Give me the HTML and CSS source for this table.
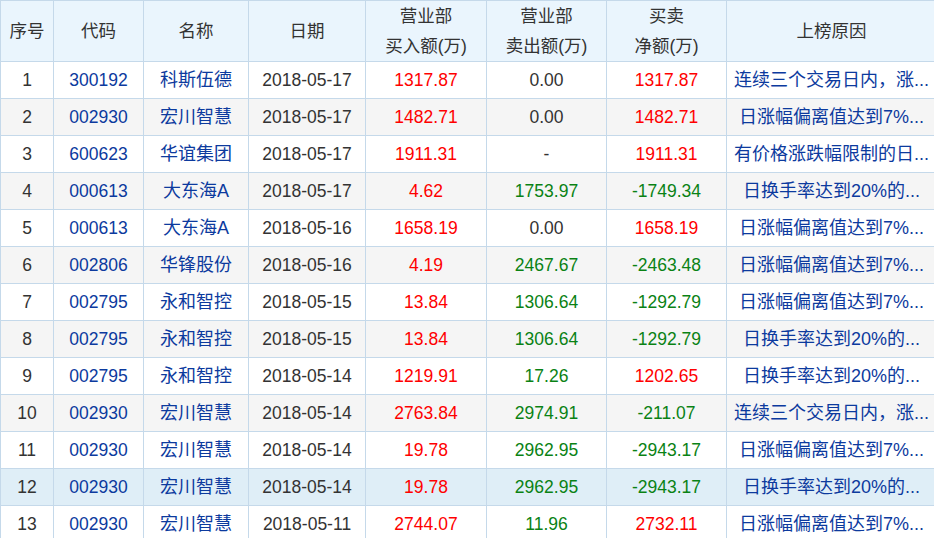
FILE: index.html
```html
<!DOCTYPE html>
<html lang="zh">
<head>
<meta charset="utf-8">
<link rel="stylesheet" href="styles.css">
</head>
<body>
<table class="lhb">
  <colgroup>
    <col class="c1"><col class="c2"><col class="c3"><col class="c4"><col class="c5"><col class="c6"><col class="c7"><col class="c8">
  </colgroup>
  <thead>
    <tr>
      <th>序号</th><th>代码</th><th>名称</th><th>日期</th>
      <th>营业部<br>买入额(万)</th><th>营业部<br>卖出额(万)</th><th>买卖<br>净额(万)</th><th>上榜原因</th>
    </tr>
  </thead>
  <tbody>
    <tr><td>1</td><td class="lk">300192</td><td class="lk cn">科斯伍德</td><td>2018-05-17</td><td class="up">1317.87</td><td>0.00</td><td class="up">1317.87</td><td class="lk cn">连续三个交易日内，涨...</td></tr>
    <tr><td>2</td><td class="lk">002930</td><td class="lk cn">宏川智慧</td><td>2018-05-17</td><td class="up">1482.71</td><td>0.00</td><td class="up">1482.71</td><td class="lk cn">日涨幅偏离值达到7%...</td></tr>
    <tr><td>3</td><td class="lk">600623</td><td class="lk cn">华谊集团</td><td>2018-05-17</td><td class="up">1911.31</td><td>-</td><td class="up">1911.31</td><td class="lk cn">有价格涨跌幅限制的日...</td></tr>
    <tr><td>4</td><td class="lk">000613</td><td class="lk cn">大东海A</td><td>2018-05-17</td><td class="up">4.62</td><td class="dn">1753.97</td><td class="dn">-1749.34</td><td class="lk cn">日换手率达到20%的...</td></tr>
    <tr><td>5</td><td class="lk">000613</td><td class="lk cn">大东海A</td><td>2018-05-16</td><td class="up">1658.19</td><td>0.00</td><td class="up">1658.19</td><td class="lk cn">日涨幅偏离值达到7%...</td></tr>
    <tr><td>6</td><td class="lk">002806</td><td class="lk cn">华锋股份</td><td>2018-05-16</td><td class="up">4.19</td><td class="dn">2467.67</td><td class="dn">-2463.48</td><td class="lk cn">日涨幅偏离值达到7%...</td></tr>
    <tr><td>7</td><td class="lk">002795</td><td class="lk cn">永和智控</td><td>2018-05-15</td><td class="up">13.84</td><td class="dn">1306.64</td><td class="dn">-1292.79</td><td class="lk cn">日涨幅偏离值达到7%...</td></tr>
    <tr><td>8</td><td class="lk">002795</td><td class="lk cn">永和智控</td><td>2018-05-15</td><td class="up">13.84</td><td class="dn">1306.64</td><td class="dn">-1292.79</td><td class="lk cn">日换手率达到20%的...</td></tr>
    <tr><td>9</td><td class="lk">002795</td><td class="lk cn">永和智控</td><td>2018-05-14</td><td class="up">1219.91</td><td class="dn">17.26</td><td class="up">1202.65</td><td class="lk cn">日换手率达到20%的...</td></tr>
    <tr><td>10</td><td class="lk">002930</td><td class="lk cn">宏川智慧</td><td>2018-05-14</td><td class="up">2763.84</td><td class="dn">2974.91</td><td class="dn">-211.07</td><td class="lk cn">连续三个交易日内，涨...</td></tr>
    <tr><td>11</td><td class="lk">002930</td><td class="lk cn">宏川智慧</td><td>2018-05-14</td><td class="up">19.78</td><td class="dn">2962.95</td><td class="dn">-2943.17</td><td class="lk cn">日涨幅偏离值达到7%...</td></tr>
    <tr class="hover"><td>12</td><td class="lk">002930</td><td class="lk cn">宏川智慧</td><td>2018-05-14</td><td class="up">19.78</td><td class="dn">2962.95</td><td class="dn">-2943.17</td><td class="lk cn">日换手率达到20%的...</td></tr>
    <tr><td>13</td><td class="lk">002930</td><td class="lk cn">宏川智慧</td><td>2018-05-11</td><td class="up">2744.07</td><td class="dn">11.96</td><td class="up">2732.11</td><td class="lk cn">日涨幅偏离值达到7%...</td></tr>
  </tbody>
</table>
</body>
</html>
```

FILE: styles.css
```css
html, body {
  margin: 0;
  padding: 0;
  background: #fff;
}
.lhb {
  border-collapse: collapse;
  table-layout: fixed;
  width: 936px;
  font-family: Arial, "Liberation Sans", "Noto Sans CJK SC", sans-serif;
  font-size: 17.5px;
  color: #333;
}
.c1 { width: 53px; }
.c2 { width: 90px; }
.c3 { width: 105px; }
.c4 { width: 117px; }
.c5 { width: 121px; }
.c6 { width: 120px; }
.c7 { width: 120px; }
.c8 { width: 210px; }
.lhb th, .lhb td {
  border: 1px solid #c5d9ea;
  text-align: center;
  white-space: nowrap;
  overflow: hidden;
  padding: 0 2px;
}
.lhb th {
  background: #eaf5fd;
  font-weight: normal;
  height: 58px;
  line-height: 30px;
  color: #333;
}
.lhb tbody td {
  height: 36px;
  line-height: 20px;
}
.lhb tbody tr:nth-child(even) td {
  background: #f5f5f5;
}
.lhb tbody tr.hover td {
  background: #dfeef7;
}
.cn { font-size: 18px; }
.lk { color: #0c3a9e; }
.up { color: #ff0000; }
.dn { color: #0a8214; }
```
